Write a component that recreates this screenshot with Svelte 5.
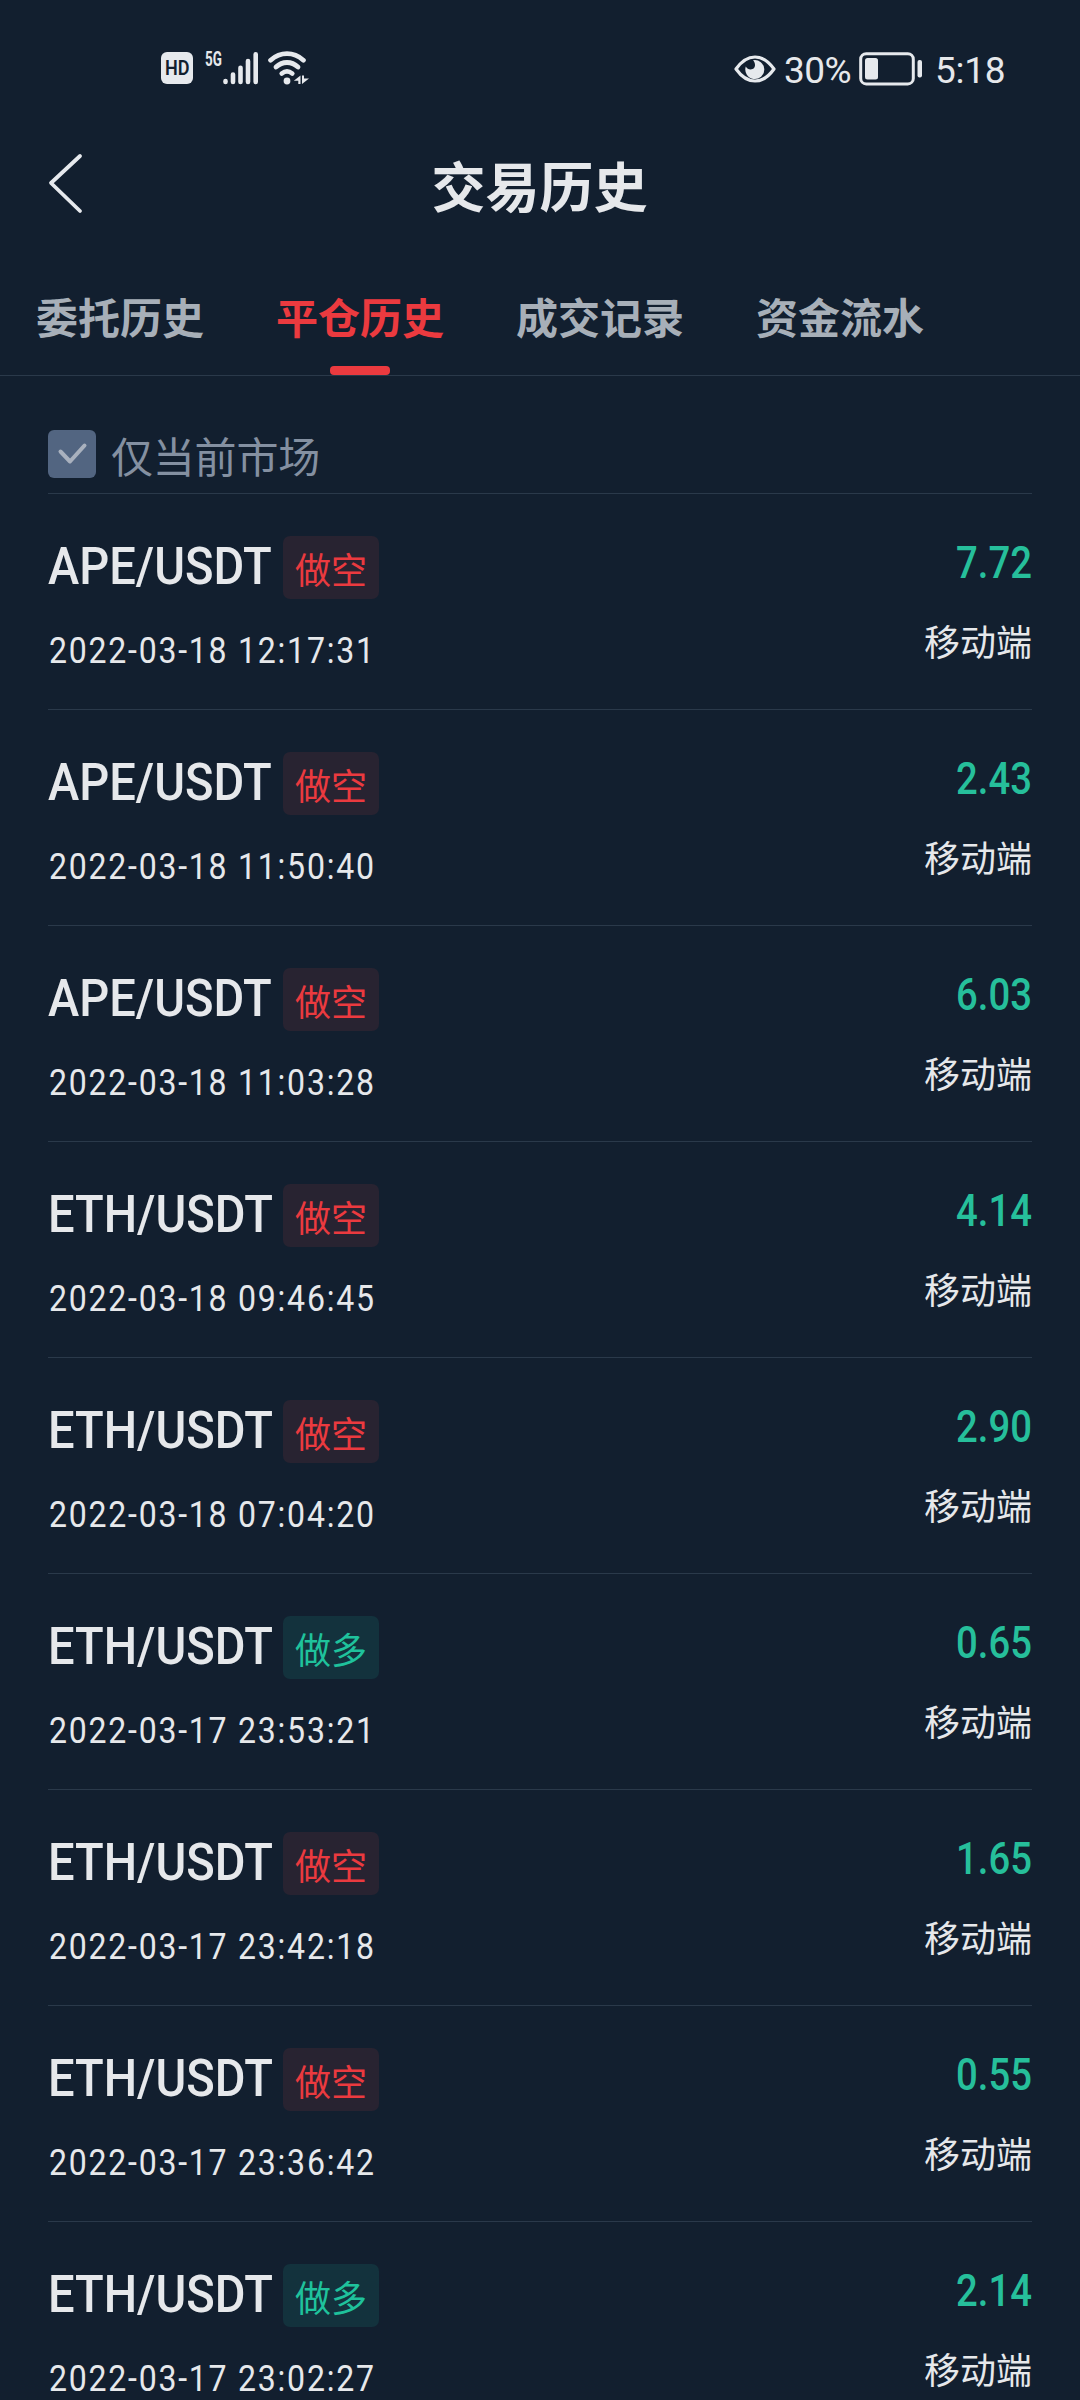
<script>
	const tabs = ['委托历史', '平仓历史', '成交记录', '资金流水'];
	let activeTab = 1;
	let onlyCurrent = true;

	const orders = [
		{ pair: 'APE/USDT', side: 'short', time: '2022-03-18 12:17:31', profit: 7.72 },
		{ pair: 'APE/USDT', side: 'short', time: '2022-03-18 11:50:40', profit: 2.43 },
		{ pair: 'APE/USDT', side: 'short', time: '2022-03-18 11:03:28', profit: 6.03 },
		{ pair: 'ETH/USDT', side: 'short', time: '2022-03-18 09:46:45', profit: 4.14 },
		{ pair: 'ETH/USDT', side: 'short', time: '2022-03-18 07:04:20', profit: 2.9 },
		{ pair: 'ETH/USDT', side: 'long', time: '2022-03-17 23:53:21', profit: 0.65 },
		{ pair: 'ETH/USDT', side: 'short', time: '2022-03-17 23:42:18', profit: 1.65 },
		{ pair: 'ETH/USDT', side: 'short', time: '2022-03-17 23:36:42', profit: 0.55 },
		{ pair: 'ETH/USDT', side: 'long', time: '2022-03-17 23:02:27', profit: 2.14 }
	];
</script>

<main>
	<div class="status">
		<div class="group">
			<span class="hd"><b>HD</b></span>
			<span class="net">5G</span>
			<svg class="signal" width="36" height="35" viewBox="0 0 36 35">
				<g stroke="#e6e9ed" stroke-width="4.6" stroke-linecap="round">
					<path d="M2.5 31v.9M10 24.5v7.4M17.500 17.700v14.200M25 11v20.900M32.700 4.200v27.700" />
				</g>
			</svg>
			<svg class="wifi" width="42" height="35" viewBox="0 0 42 35">
				<g fill="none" stroke="#e6e9ed" stroke-width="4.8" stroke-linecap="round">
					<path d="M2.6 10.2C12.5 1.500 25.500 1.500 35.400 10.200" />
					<path d="M8 17C14.500 11 23.500 11 30 17" />
					<path d="M13.800 23.500C17 20.900 21 20.900 24.200 23.500" />
				</g>
				<circle cx="19" cy="31" r="3.4" fill="#e6e9ed" />
				<path d="M32.500 25.500v8.500h-2.200v-3.300h-4.500zM34 34V25.500h2v3h5z" fill="#e6e9ed" />
			</svg>
		</div>
		<div class="group">
			<svg class="eye" width="42" height="28" viewBox="0 0 42 28">
				<path
					d="M2 14C8 5.5 14 2 21 2s13 3.5 19 12c-6 8.500-12 12-19 12S8 22.500 2 14z"
					fill="none"
					stroke="#e6e9ed"
					stroke-width="3.2"
					stroke-linejoin="round"
				/>
				<path
					d="M19 5.2a9.5 9.5 0 1 1-7.2 6.3c1.4 2.6 4.3 3.8 6.7 2.6 3.2-1.6 3.3-6 .5-8.9z"
					fill="#e6e9ed"
				/>
			</svg>
			<span class="percent">30%</span>
			<svg class="battery" width="64" height="34" viewBox="0 0 64 34">
				<rect x="1.7" y="1.7" width="52.6" height="30.2" rx="5.5" fill="none" stroke="#e6e9ed" stroke-width="3" />
				<rect x="6" y="6" width="13" height="21.5" rx="2.5" fill="#e6e9ed" />
				<rect x="58.5" y="8" width="4.5" height="17.5" rx="2" fill="#e6e9ed" />
			</svg>
			<span class="clock">5:18</span>
		</div>
	</div>

	<header>
		<svg width="36" height="62" viewBox="0 0 36 62">
			<path
				d="M33 4L4 31l29 28"
				fill="none"
				stroke="#e6e9ed"
				stroke-width="3.8"
				stroke-linecap="round"
				stroke-linejoin="round"
			/>
		</svg>
		<h1>交易历史</h1>
	</header>

	<nav>
		{#each tabs as tab, i}
			<button class:active={i === activeTab} on:click={() => (activeTab = i)}>{tab}</button>
		{/each}
	</nav>

	<section>
		<button class="filter" on:click={() => (onlyCurrent = !onlyCurrent)}>
			<span class="box">
				{#if onlyCurrent}
					<svg width="48" height="48" viewBox="0 0 48 48">
						<path
							d="M12.5 21.5l9.5 10L36.5 15.5"
							fill="none"
							stroke="#a9b1be"
							stroke-width="4"
							stroke-linecap="round"
							stroke-linejoin="round"
						/>
					</svg>
				{/if}
			</span>
			<span class="label">仅当前市场</span>
		</button>

		<ul>
			{#each orders as order}
				<li>
					<div class="left">
						<div class="name">
							<span class="pair"><span>{order.pair}</span></span>
							<span class="tag {order.side}">{order.side === 'long' ? '做多' : '做空'}</span>
						</div>
						<div class="time">{order.time}</div>
					</div>
					<div class="right">
						<div class="profit">{order.profit.toFixed(2)}</div>
						<div class="source">移动端</div>
					</div>
				</li>
			{/each}
		</ul>
	</section>
</main>

<style>
	:global(body) {
		background: #121f2f;
	}

	main {
		width: 1080px;
		height: 2400px;
		overflow: hidden;
		background: #121f2f;
		color: #e6e8eb;
		font-family: Roboto, 'Noto Sans CJK SC', sans-serif;
	}

	button {
		margin: 0;
		padding: 0;
		border: 0;
		background: none;
		font-family: 'Noto Sans CJK SC', sans-serif;
		white-space: nowrap;
	}

	.status {
		box-sizing: border-box;
		height: 136px;
		padding: 51px 74px 0 161px;
		display: flex;
		justify-content: space-between;
	}

	.group {
		display: flex;
		align-items: flex-start;
		height: 36px;
	}

	.hd {
		width: 32px;
		height: 32px;
		margin-top: 1px;
		border-radius: 6px;
		background: #e6e9ed;
		color: #121f2f;
		font-size: 21px;
		line-height: 33px;
		text-align: center;
	}

	.hd b {
		display: inline-block;
		margin: 0 -3px;
		font-weight: 600;
		transform: scaleX(0.86);
	}

	.net {
		width: 17px;
		margin-left: 12px;
		font-size: 21px;
		font-weight: 700;
		line-height: 16px;
		transform: scaleX(0.64);
		transform-origin: left;
	}

	.signal {
		margin: -1px 0 0 1px;
	}

	.wifi {
		margin: -1px 0 0 9px;
	}

	.eye {
		margin-top: 4px;
	}

	.percent,
	.clock {
		font-size: 37px;
		line-height: 40px;
	}

	.percent {
		width: 75px;
		margin-left: 8px;
		letter-spacing: -0.5px;
	}

	.battery {
		margin-top: 1px;
	}

	.clock {
		margin-left: 12px;
		width: 71px;
		letter-spacing: -0.3px;
	}

	header {
		height: 96px;
		padding-left: 47px;
		display: flex;
		align-items: center;
	}

	header svg {
		margin-bottom: 3px;
	}

	h1 {
		flex: 1;
		margin: 1px 84px 0 0;
		font-family: 'Noto Sans CJK SC', sans-serif;
		font-size: 54px;
		font-weight: 700;
		line-height: 60px;
		text-align: center;
	}

	nav {
		box-sizing: border-box;
		height: 144px;
		padding-left: 36px;
		border-bottom: 1px solid #2a394a;
		display: flex;
		gap: 72px;
	}

	nav button {
		position: relative;
		width: 168px;
		height: 143px;
		color: #a7afb8;
		font-size: 42px;
		font-weight: 700;
		line-height: 168px;
	}

	nav .active {
		color: #eb3a3f;
	}

	nav .active::after {
		content: '';
		position: absolute;
		left: 54px;
		bottom: 0;
		width: 60px;
		height: 9px;
		border-radius: 4px;
		background: #eb3a3f;
	}

	section {
		padding: 0 48px;
	}

	.filter {
		box-sizing: border-box;
		width: 984px;
		height: 118px;
		padding: 54px 0 15px;
		border-bottom: 1px solid #2a394a;
		display: flex;
		align-items: center;
		gap: 15px;
		color: #8490a1;
		font-size: 42px;
		line-height: 48px;
	}

	.label {
		padding-top: 2px;
		letter-spacing: -0.2px;
	}

	.box {
		width: 48px;
		height: 48px;
		border-radius: 6px;
		background: #526581;
	}

	ul {
		margin: 0;
		padding: 0;
		list-style: none;
	}

	li {
		box-sizing: border-box;
		height: 216px;
		padding-top: 42px;
		border-bottom: 1px solid #2a394a;
		display: flex;
		justify-content: space-between;
	}

	.name {
		display: flex;
		height: 63px;
	}

	/* condensed with a transform, so the box keeps its own width */
	.pair {
		width: 235px;
		font-size: 52px;
		font-weight: 500;
		line-height: 62px;
		white-space: nowrap;
	}

	.pair span {
		display: inline-block;
		transform: scaleX(0.905);
		transform-origin: left;
	}

	.tag {
		width: 96px;
		height: 63px;
		border-radius: 7px;
		font-family: 'Noto Sans CJK SC', sans-serif;
		font-size: 36px;
		line-height: 65px;
		text-align: center;
	}

	.short {
		color: #eb3a3f;
		background: #282331;
	}

	.long {
		color: #1fc29c;
		background: #13323d;
	}

	.time {
		margin: 31px 0 0 1px;
		font-size: 36.5px;
		line-height: 42px;
		letter-spacing: 2px;
		transform: scaleX(0.878);
		transform-origin: left;
		white-space: nowrap;
	}

	.right {
		text-align: right;
	}

	.profit {
		margin-top: 1px;
		color: #26bf9b;
		font-size: 44px;
		font-weight: 500;
		line-height: 52px;
		transform: scaleX(0.87);
		transform-origin: right;
	}

	.source {
		margin-top: 29px;
		font-family: 'Noto Sans CJK SC', sans-serif;
		font-size: 36px;
		line-height: 44px;
	}
</style>
